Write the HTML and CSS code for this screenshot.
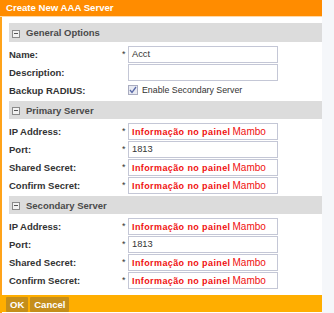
FILE: index.html
```html
<!DOCTYPE html>
<html lang="en">
<head>
    <meta charset="UTF-8">
    <title>Create New AAA Server</title>
    <link rel="stylesheet" href="styles.css">
</head>
<body>
    <div class="page">
        <div class="dialog">
            <div class="title">Create New AAA Server</div>

            <div class="body">
                <div class="section-head"><span class="toggle"></span>General Options</div>
                <div class="row">
                    <label>Name:</label>
                    <span class="req">*</span>
                    <span class="field">Acct</span>
                </div>
                <div class="row">
                    <label>Description:</label>
                    <span class="req"></span>
                    <span class="field"></span>
                </div>
                <div class="row">
                    <label>Backup RADIUS:</label>
                    <span class="req"></span>
                    <span class="check-wrap">
                        <span class="check">
                            <svg width="8" height="8" viewBox="0 0 8 8"><path d="M1 4 L3 6.5 L7 1" fill="none" stroke="#5a6aa8" stroke-width="1.3"/></svg>
                        </span>
                        Enable Secondary Server
                    </span>
                </div>

                <div class="section-head"><span class="toggle"></span>Primary Server</div>
                <div class="row">
                    <label>IP Address:</label>
                    <span class="req">*</span>
                    <span class="field"><span class="info">Informação no painel</span><span class="mambo">Mambo</span></span>
                </div>
                <div class="row">
                    <label>Port:</label>
                    <span class="req">*</span>
                    <span class="field">1813</span>
                </div>
                <div class="row">
                    <label>Shared Secret:</label>
                    <span class="req">*</span>
                    <span class="field"><span class="info">Informação no painel</span><span class="mambo">Mambo</span></span>
                </div>
                <div class="row">
                    <label>Confirm Secret:</label>
                    <span class="req">*</span>
                    <span class="field"><span class="info">Informação no painel</span><span class="mambo">Mambo</span></span>
                </div>

                <div class="section-head"><span class="toggle"></span>Secondary Server</div>
                <div class="row">
                    <label>IP Address:</label>
                    <span class="req">*</span>
                    <span class="field"><span class="info">Informação no painel</span><span class="mambo">Mambo</span></span>
                </div>
                <div class="row">
                    <label>Port:</label>
                    <span class="req">*</span>
                    <span class="field">1813</span>
                </div>
                <div class="row">
                    <label>Shared Secret:</label>
                    <span class="req">*</span>
                    <span class="field"><span class="info">Informação no painel</span><span class="mambo">Mambo</span></span>
                </div>
                <div class="row">
                    <label>Confirm Secret:</label>
                    <span class="req">*</span>
                    <span class="field"><span class="info">Informação no painel</span><span class="mambo">Mambo</span></span>
                </div>
            </div>

            <div class="footer">
                <button>OK</button>
                <button>Cancel</button>
            </div>
        </div>
        <div class="strip"></div>
    </div>
</body>
</html>
```

FILE: styles.css
```css
* {
    margin: 0;
    padding: 0;
    box-sizing: border-box;
}
body {
    font-family: 'Liberation Sans', Arial, sans-serif;
    font-size: 9px;
    color: #333;
    background-color: #fff;
}
.page {
    display: flex;
    height: 313px;
}
.dialog {
    width: 322px;
    background-color: #fff;
    border-left: 2px solid #ffa31a;
}
.strip {
    flex: 1;
    background-color: #f5f7fa;
}
.title {
    height: 17px;
    background-color: #ff8c00;
    border-bottom: 1px solid #ffd8a6;
    color: #fff;
    font-weight: bold;
    font-size: 9.6px;
    line-height: 15px;
    padding-left: 6px;
    margin-left: -2px;
}
.body {
    padding: 6px 0 0 7px;
}
.section-head {
    display: flex;
    align-items: center;
    height: 18px;
    margin: 2px 0 3px;
    background-color: #dcdcdc;
    color: #4a4a4a;
    font-weight: bold;
    font-size: 9.5px;
    padding-left: 3px;
}
.body > .section-head:first-child {
    margin-top: 0;
    height: 19px;
}
.toggle {
    width: 8px;
    height: 8px;
    border: 1px solid #8a8a8a;
    background-color: #f2f2f2;
    margin: 2px 6px 0 0;
    position: relative;
}
.toggle::after {
    content: '';
    position: absolute;
    left: 1px;
    right: 1px;
    top: 2px;
    height: 1px;
    background-color: #555;
}
.row {
    display: flex;
    align-items: center;
    height: 18px;
}
.row label {
    width: 113px;
    font-weight: bold;
    font-size: 9.5px;
    color: #333;
}
.req {
    width: 6px;
    font-size: 9px;
    color: #333;
}
.field {
    width: 150px;
    height: 17px;
    border: 1px solid #c4c7d6;
    background-color: #fff;
    padding-left: 3px;
    line-height: 15px;
    font-size: 9.3px;
    color: #333;
    white-space: nowrap;
    overflow: hidden;
}
.info {
    color: #f01010;
    font-size: 9px;
    font-weight: bold;
    letter-spacing: 0.4px;
    margin-right: 2px;
}
.mambo {
    color: #f01010;
    font-size: 10px;
}
.check-wrap {
    display: flex;
    align-items: center;
    font-size: 8.8px;
    color: #333;
}
.check {
    width: 10px;
    height: 10px;
    border: 1px solid #a9acc0;
    background-color: #e8eaf2;
    display: flex;
    align-items: center;
    justify-content: center;
    margin-right: 4px;
}
.footer {
    margin-top: 6px;
    margin-left: -2px;
    height: 17px;
    background-color: #ffae00;
    padding: 2px 0 0 6px;
    display: flex;
    gap: 2px;
}
.footer button {
    height: 15px;
    padding: 0 4px;
    border: none;
    border-radius: 1px;
    background-color: #c58e1a;
    color: #fff;
    font-family: 'Liberation Sans', Arial, sans-serif;
    font-weight: bold;
    font-size: 9.5px;
}
```
